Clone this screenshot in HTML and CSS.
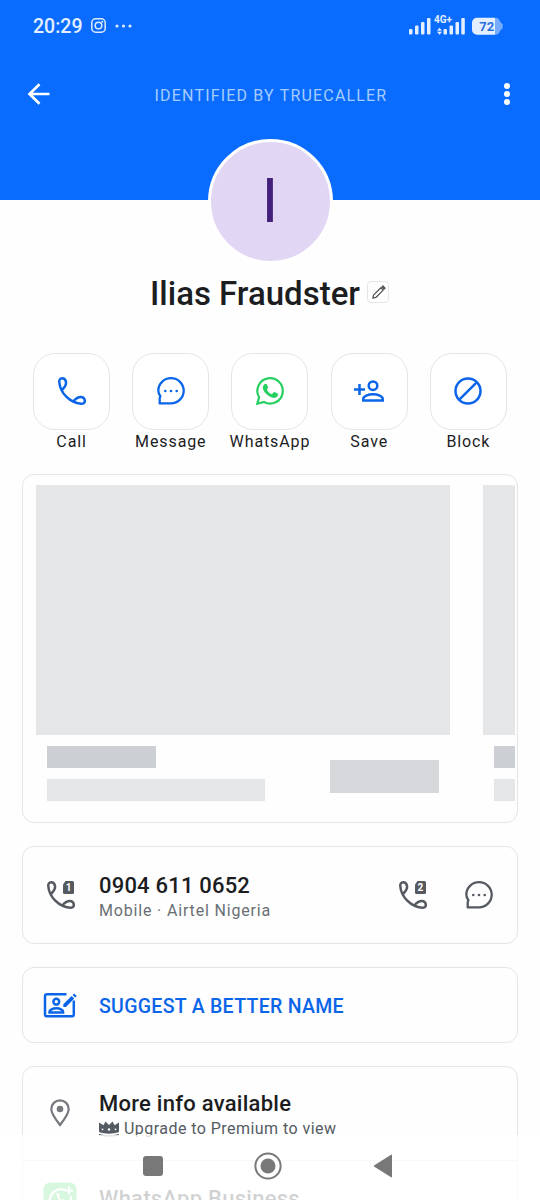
FILE: index.html
```html
<!DOCTYPE html>
<html lang="en">
<head>
<meta charset="utf-8">
<title>Caller details</title>
<link rel="stylesheet" href="styles.css">
</head>
<body>
<svg class="defs" width="0" height="0">
  <symbol id="call" viewBox="0 0 28 28"><path d="M3.900 13C6.500 10.500 8.400 7.500 8 5 7.600 2.600 6 1.300 4.200 1.300 2 1.300 1.100 3 1.300 5 2 16 12 26 23 26.700c2.500.1 4-1.200 3.800-2.900C26.600 21.500 25 20 22.800 20c-2.500 0-5 1.600-7.300 4" fill="none" stroke="currentColor" stroke-width="2.500" stroke-linejoin="round"/></symbol>
  <symbol id="chat" viewBox="0 0 28 28"><path d="M2.700 26.400V21.200l.7-2C2 17.300 1.300 15.500 1.300 13.500 1.300 6.800 7 1.200 14 1.200S26.700 6.800 26.700 13.700 21 26.400 14 26.400H2.700Z" fill="none" stroke="currentColor" stroke-width="2.300" stroke-linejoin="round"/><g fill="currentColor"><circle cx="8.300" cy="14" r="1.300"/><circle cx="14" cy="14" r="1.300"/><circle cx="19.700" cy="14" r="1.300"/></g></symbol>
</svg>
<main class="screen">
  <header class="header">
    <div class="status">
      <span class="clock">20:29</span>
      <svg class="insta" width="15" height="15" viewBox="0 0 15 15"><g fill="none" stroke="#dceaff" stroke-width="1.500"><rect x=".8" y=".8" width="13.400" height="13.400" rx="3.800"/><circle cx="7.500" cy="7.500" r="3.300"/></g><circle cx="11.300" cy="3.700" r="1" fill="#dceaff"/></svg>
      <svg class="more" width="17" height="4" viewBox="0 0 17 4"><g fill="#dceaff"><circle cx="2" cy="2" r="1.600"/><circle cx="8.500" cy="2" r="1.600"/><circle cx="15" cy="2" r="1.600"/></g></svg>
      <svg class="signal" width="96" height="22" viewBox="0 0 96 22">
        <g fill="#e3efff"><rect x="1" y="14" width="3.500" height="5.500" rx="1"/><rect x="7" y="10.500" width="3.500" height="9" rx="1"/><rect x="13" y="7" width="3.500" height="12.500" rx="1"/><rect x="19" y="3" width="3.500" height="16.500" rx="1"/><rect x="35.500" y="14" width="3.500" height="5.500" rx="1"/><rect x="41.500" y="10.500" width="3.500" height="9" rx="1"/><rect x="47.500" y="7" width="3.500" height="12.500" rx="1"/><rect x="53.300" y="3" width="3.500" height="16.500" rx="1"/><path d="M31.500 12.700l2.500 3h-5zM31.500 19.700l2.500-3h-5z"/><path d="M69 2.800h18v17H69a5 5 0 0 1-5-5v-7a5 5 0 0 1 5-5Z"/></g>
        <path d="M87 2.800c3 .3 4.500 1.300 5 4l2.700 2.500v4L92 15.800c-.5 2.700-2 3.700-5 4Z" fill="#75acff"/>
        <text class="net" x="26" y="8.200">4G+</text><text class="battery" x="71.300" y="16">72</text>
      </svg>
    </div>
    <div class="appbar">
      <svg width="24" height="24" viewBox="0 0 24 24"><path d="M22.500 12H2.500M12.500 2.200L2.500 12l10 9.800" fill="none" stroke="#fff" stroke-width="2.700"/></svg>
      <span class="identified">IDENTIFIED BY TRUECALLER</span>
      <svg width="8" height="24" viewBox="0 0 8 24"><g fill="#fff"><circle cx="4" cy="4" r="3"/><circle cx="4" cy="12" r="3"/><circle cx="4" cy="20" r="3"/></g></svg>
    </div>
  </header>
  <div class="avatar">I</div>
  <div class="name-row">
    <h1 class="name">Ilias Fraudster</h1>
    <span class="edit"><svg width="15" height="15" viewBox="0 0 16 16"><path d="M2 14l.7-3.200L10.500 3l2.500 2.500-7.800 7.800ZM11.700 2l1-1L15 3.300l-1 1Z" fill="none" stroke="#555" stroke-width="1.400" stroke-linejoin="round"/></svg></span>
  </div>
  <nav class="actions">
    <div class="action"><span class="tile"><svg width="28" height="28"><use href="#call"/></svg></span>Call</div>
    <div class="action"><span class="tile"><svg width="28" height="28"><use href="#chat"/></svg></span>Message</div>
    <div class="action"><span class="tile whatsapp"><svg width="28" height="28" viewBox="0 0 28 28"><path d="M1.300 26.700l1.800-6.400A12.700 12.700 0 1 1 7.900 25Z" fill="none" stroke="currentColor" stroke-width="2.200"/><path d="M8.200 7.500c.8-1 2.200-.9 2.700.1l1.100 2.700c.3.700-.2 1.300-1.100 2.200.8 2.200 2.800 3.900 5.100 4.800l1.500-1.800c.4-.5.900-.5 1.400-.2l2.700 1.300c.8.500.5 2.200-.5 3.200-2 2-5.600 1.200-9-1.400-4-3-7.200-7.500-3.900-10.900Z" fill="currentColor"/></svg></span>WhatsApp</div>
    <div class="action"><span class="tile"><svg width="32" height="28" viewBox="0 0 32 28"><g fill="none" stroke="currentColor" stroke-width="2.500"><path d="M1 12.500h11M6.500 7v11"/><circle cx="20" cy="8.700" r="4.300"/><path d="M10.300 23.500v-1.700c0-2.600 4.800-4.600 9.700-4.600s9.700 2 9.700 4.600v1.700Z"/></g></svg></span>Save</div>
    <div class="action"><span class="tile"><svg width="28" height="28" viewBox="0 0 28 28"><g fill="none" stroke="currentColor" stroke-width="2.500"><circle cx="14" cy="14" r="12.500"/><path d="M5.300 22.700L22.700 5.300"/></g></svg></span>Block</div>
  </nav>
  <div class="cards">
    <section class="card carousel">
      <div class="slide">
        <div class="ph image"></div>
        <div class="meta"><div class="lines"><div class="ph title"></div><div class="ph line"></div></div><div class="ph button"></div></div>
      </div>
      <div class="slide">
        <div class="ph image"></div>
        <div class="meta"><div class="lines"><div class="ph title"></div><div class="ph line"></div></div></div>
      </div>
    </section>
    <section class="card number">
      <svg class="lead" width="30" height="28" viewBox="0 0 30 28"><use href="#call" width="28" height="28"/><path d="M18.500 0H25.500a1.500 1.500 0 0 1 1.500 1.500v10a1.500 1.500 0 0 1-1.500 1.500h-8a1.500 1.500 0 0 1-1.500-1.500v-8Z" fill="currentColor"/><text class="sim" x="18.700" y="10.200">1</text></svg>
      <div class="text"><div class="primary">0904 611 0652</div><div class="secondary">Mobile · Airtel Nigeria</div></div>
      <svg width="30" height="28" viewBox="0 0 30 28"><use href="#call" width="28" height="28"/><path d="M18.500 0H25.500a1.500 1.500 0 0 1 1.500 1.500v10a1.500 1.500 0 0 1-1.500 1.500h-8a1.500 1.500 0 0 1-1.500-1.500v-8Z" fill="currentColor"/><text class="sim" x="18.500" y="10.200">2</text></svg>
      <svg class="sms" width="28" height="28"><use href="#chat"/></svg>
    </section>
    <section class="card suggest">
      <svg width="34" height="28" viewBox="0 0 34 28"><g fill="none" stroke="currentColor" stroke-width="2.500"><path d="M23.500 3.200H3.800a1.800 1.800 0 0 0-1.800 1.800V23.500a1.800 1.800 0 0 0 1.800 1.800h25.200a1.800 1.800 0 0 0 1.800-1.800V9.500"/><circle cx="13.300" cy="10.700" r="2.900"/><path d="M6.500 21.500v-.7c0-2 3.300-3.500 6.800-3.500s6.800 1.500 6.800 3.500v.7Z"/></g><path d="M20.300 13.200l8.300-8.300 2.700 2.700-8.300 8.300h-2.700zM29.600 3.900l1.500-1.500L33.800 5l-1.500 1.500z" fill="currentColor"/></svg>
      <span class="suggest-text">SUGGEST A BETTER NAME</span>
    </section>
    <section class="card info">
      <div class="row">
        <svg class="pin" width="20" height="28" viewBox="0 0 20 28"><path d="M10 26C6.500 21.500 1.300 15 1.300 10a8.700 8.700 0 0 1 17.400 0c0 5-5.200 11.500-8.700 16Z" fill="none" stroke="#76797d" stroke-width="2.200"/><circle cx="10" cy="10" r="3.300" fill="#76797d"/></svg>
        <div class="text"><div class="primary">More info available</div>
          <div class="premium"><svg width="20" height="16" viewBox="0 0 20 16"><path d="M0 1.500l4.500 2.700L6.500.5 10 4 13.500.5l2 3.700L20 1.500V11c-6 2.300-14 2.300-20 0ZM0 13c6 1.700 14 1.700 20 0v1.500c-6 1.300-14 1.300-20 0Z" fill="#555b63"/><g fill="#fff"><circle cx="3.500" cy="8.300" r=".9"/><circle cx="10" cy="8.500" r="1.200"/><circle cx="16.500" cy="8.300" r=".9"/></g></svg>Upgrade to Premium to view</div></div>
      </div>
      <div class="row business">
        <svg class="biz" width="34" height="34" viewBox="0 0 34 34"><rect x=".5" y=".5" width="33" height="33" rx="7" fill="#38d85a"/><path d="M23 8.500A11 11 0 0 0 7.800 22.500L6.500 28l5.500-1.400A11 11 0 0 0 27.500 14" fill="none" stroke="#fff" stroke-width="2.300"/><path d="M26 4.500v8M22 8.500h8" stroke="#fff" stroke-width="2"/><path d="M13 12l2 4c1 3 3 5 6 6l2-3-3-2-2 1-2-3 1-2-2-2Z" fill="#fff"/></svg>
        <div class="text primary">WhatsApp Business</div>
      </div>
    </section>
  </div>
  <footer class="system-nav">
    <svg width="20" height="20"><rect width="20" height="20" rx="3" fill="#787878"/></svg>
    <svg width="28" height="28" viewBox="0 0 28 28"><circle cx="14" cy="14" r="12.600" fill="none" stroke="#787878" stroke-width="2"/><circle cx="14" cy="14" r="7.500" fill="#787878"/></svg>
    <svg width="20" height="24" viewBox="0 0 20 24"><path d="M1 12L18.500 1v22Z" fill="#787878" stroke="#787878" stroke-linejoin="round"/></svg>
  </footer>
</main>
</body>
</html>
```

FILE: styles.css
```css
* { box-sizing: border-box; }
body { margin: 0; background: #fefefe; font-family: Roboto, sans-serif; color: #1c1d1f; }
svg { display: block; flex: none; }
.defs { display: none; }
.screen { position: relative; width: 540px; height: 1200px; overflow: hidden; background: #fefefe; }
.header { height: 200.400px; background: #096cff; color: #fff; }
.status { display: flex; align-items: center; height: 51px; padding-left: 33px; }
.clock { width: 58px; font-size: 19.500px; font-weight: 500; line-height: 24px; color: #e3efff; margin-top: 2px; }
.more { margin-left: 8.500px; }
.signal { margin-left: auto; margin-right: 36px; }
.net { font: 700 10px Roboto, sans-serif; fill: #e3efff; }
.battery { font: 700 13px Roboto, sans-serif; fill: #2a6fdc; }
.appbar { display: flex; align-items: center; justify-content: space-between; height: 86px; padding: 0 29px 0 27px; }
.identified { font-size: 16px; line-height: 20px; letter-spacing: 1.180px; color: #a5ccff; margin: 3px 12px 0 0; }
.avatar { display: flex; align-items: center; justify-content: center; width: 125px; height: 125px; margin: -61.900px auto 0; border: 3px solid #fff; border-radius: 50%; background: #e1d7f5; color: #44217c; font-size: 62px; font-weight: 400; line-height: 1; position: relative; }
.name-row { display: flex; align-items: center; justify-content: center; gap: 7px; height: 60px; padding-right: 1px; }
.name { margin: 0; font-size: 33px; font-weight: 500; line-height: 40px; }
.edit { display: grid; place-items: center; width: 22px; height: 22px; margin-bottom: 3px; border: 1px solid #e6e6e6; border-radius: 4px; }
.actions { display: grid; grid-template-columns: repeat(5, 1fr); padding: 29px 22px 0; }
.action { display: flex; flex-direction: column; align-items: center; font-size: 16px; letter-spacing: .9px; line-height: 24px; }
.tile { display: grid; place-items: center; width: 77px; height: 77px; border: 1px solid #e5e5e6; border-radius: 22px; color: #0b65e8; background: #fff; }
.whatsapp { color: #25cf62; }
.cards { display: flex; flex-direction: column; gap: 23px; padding: 20.500px 22px 0; }
.card { border: 1px solid #e4e5e6; border-radius: 12px; background: #fefefe; }
.carousel { display: flex; gap: 33px; height: 349px; padding: 10px 2px 0 13px; overflow: clip; overflow-clip-margin: content-box; }
.slide { flex: none; width: 414px; }
.ph { background: #e5e6e8; }
.image { height: 250px; }
.meta { display: flex; justify-content: space-between; align-items: center; padding: 11px 11px 0; height: 66px; }
.title { width: 109px; height: 22px; background: #ccd0d5; margin-bottom: 11px; }
.line { width: 218px; height: 22px; }
.button { width: 109px; height: 33px; margin-top: 5px; background: #d7d8dc; }
.number { display: flex; align-items: center; height: 98px; padding: 0 24px; color: #555960; }
.lead { margin-right: 22px; }
.number .text { width: 300px; padding-top: 5px; }
.number .primary { letter-spacing: .2px; }
.sms { margin-left: auto; }
.sim { font: 700 10px Roboto, sans-serif; fill: #fff; }
.primary { font-size: 22px; font-weight: 500; line-height: 26px; letter-spacing: .26px; color: #1c1d1f; white-space: nowrap; }
.secondary { font-size: 16px; line-height: 24px; letter-spacing: .83px; color: #6a6e74; }
.suggest { display: flex; align-items: center; gap: 22px; height: 76px; padding: 0 20px; color: #0b65e8; }
.suggest-text { padding-top: 3px; font-size: 19.500px; font-weight: 500; line-height: 24px; letter-spacing: .3px; }
.info { height: 180px; margin-top: -.5px; }
.row { display: flex; align-items: center; height: 93px; }
.row .text { padding-top: 5px; }
.pin { margin: 0 28px 0 27px; }
.info .pin + .text { margin-left: 1px; }
.premium { display: flex; align-items: center; gap: 5px; font-size: 16px; line-height: 24px; letter-spacing: .45px; color: #555b63; }
.row.business { border-top: 1px solid #ddd; height: 77px; }
.row.business .text { padding-top: 0; }
.biz { margin: 0 22px 0 20px; }
.system-nav { position: absolute; left: 0; right: 0; bottom: 0; height: 65px; display: grid; grid-template-columns: 115px 115px 115px; justify-items: center; align-items: center; padding: 0 100px 4px 95px; background: rgba(255, 255, 255, .8); }
```
